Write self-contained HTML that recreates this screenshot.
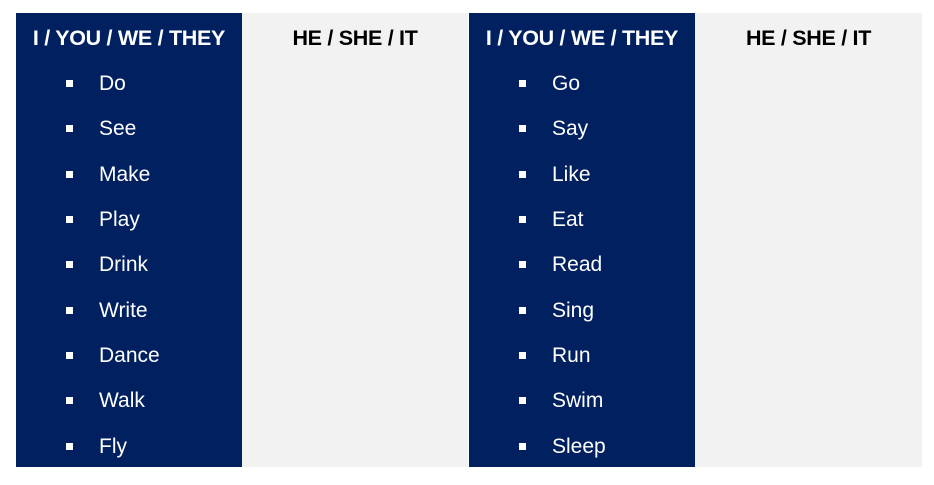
<!DOCTYPE html>
<html><head><style>
body{margin:0;width:934px;height:485px;background:#fff;position:relative;overflow:hidden;font-family:"Liberation Sans",sans-serif;}
.c{position:absolute;top:13px;height:454px;}
.d{background:#002060;color:#fff;}
.l{background:#f2f2f2;color:#000;}
.h{position:absolute;top:13px;left:0;right:0;text-align:center;font-weight:bold;font-size:21.5px;line-height:24px;letter-spacing:-0.3px;}
.i{position:absolute;left:0;font-size:21px;line-height:24px;}
.i span{position:absolute;left:50px;top:8px;width:7px;height:7px;background:#fff;}
.i b{position:absolute;left:83px;font-weight:normal;white-space:nowrap;}
</style></head><body>
<div class="c d" style="left:16px;width:226px"><div class="h">I / YOU / WE / THEY</div>
<div class="i" style="top:59px"><span></span><b>Do</b></div>
<div class="i" style="top:104px"><span></span><b>See</b></div>
<div class="i" style="top:150px"><span></span><b>Make</b></div>
<div class="i" style="top:195px"><span></span><b>Play</b></div>
<div class="i" style="top:240px"><span></span><b>Drink</b></div>
<div class="i" style="top:286px"><span></span><b>Write</b></div>
<div class="i" style="top:331px"><span></span><b>Dance</b></div>
<div class="i" style="top:376px"><span></span><b>Walk</b></div>
<div class="i" style="top:422px"><span></span><b>Fly</b></div>
</div>
<div class="c l" style="left:242px;width:226px"><div class="h">HE / SHE / IT</div></div>
<div class="c d" style="left:469px;width:226px"><div class="h">I / YOU / WE / THEY</div>
<div class="i" style="top:59px"><span></span><b>Go</b></div>
<div class="i" style="top:104px"><span></span><b>Say</b></div>
<div class="i" style="top:150px"><span></span><b>Like</b></div>
<div class="i" style="top:195px"><span></span><b>Eat</b></div>
<div class="i" style="top:240px"><span></span><b>Read</b></div>
<div class="i" style="top:286px"><span></span><b>Sing</b></div>
<div class="i" style="top:331px"><span></span><b>Run</b></div>
<div class="i" style="top:376px"><span></span><b>Swim</b></div>
<div class="i" style="top:422px"><span></span><b>Sleep</b></div>
</div>
<div class="c l" style="left:695px;width:227px"><div class="h">HE / SHE / IT</div></div>
</body></html>
